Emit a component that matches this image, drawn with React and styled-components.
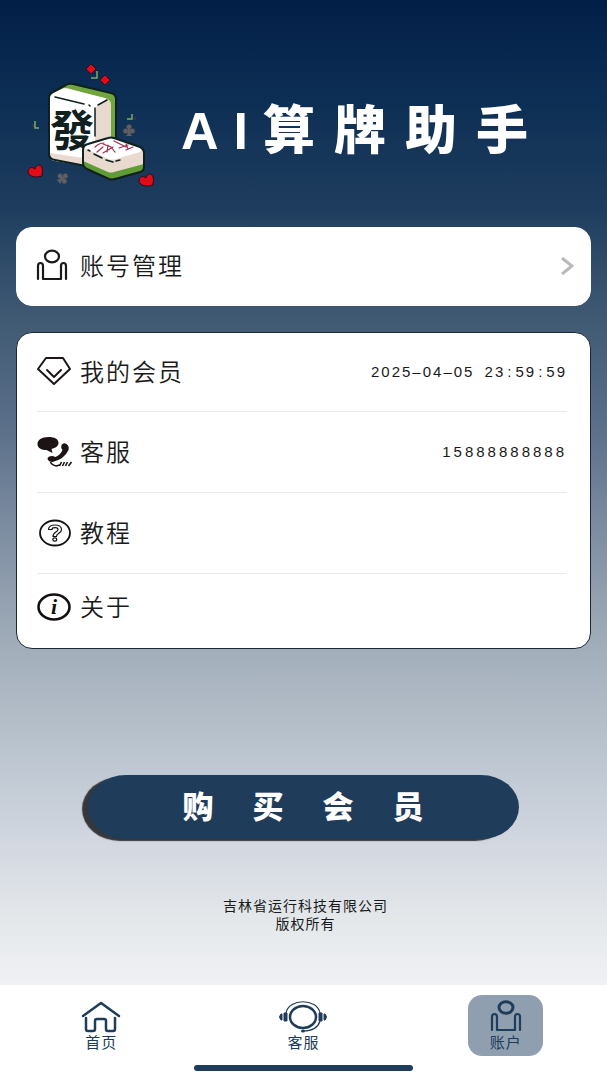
import React from "react";
import styled, { createGlobalStyle } from "styled-components";

const GlobalStyle = createGlobalStyle`
  * {
    box-sizing: border-box;
  }
  body {
    margin: 0;
    background: #fff;
    font-family: "Noto Sans CJK SC", "Noto Sans", sans-serif;
    color: #1a1a1a;
  }
`;

const Page = styled.div`
  display: flex;
  flex-direction: column;
  min-height: 100vh;
`;

const Main = styled.main`
  flex: 1;
  display: flex;
  flex-direction: column;
  padding: 62px 16px 50px;
  background: linear-gradient(
    #021f47 0%,
    #0d2e54 10%,
    #1e3d5e 21%,
    #3f5973 32%,
    #5d718b 44%,
    #7e8ea2 54%,
    #a2aeba 66%,
    #bac4cf 76%,
    #d3d8e1 86%,
    #e3e7ea 93%,
    #f0f1f5 100%
  );
`;

const Header = styled.header`
  display: flex;
  align-items: center;
  gap: 24px;
  height: 130px;
  padding-left: 10px;
  margin-bottom: 35px;
`;

const Title = styled.h1`
  margin: 0;
  padding-top: 8px;
  color: #fff;
  font-family: "Liberation Sans", "Noto Sans CJK SC", sans-serif;
  font-size: 52px;
  line-height: 60px;
  font-weight: 900;
  letter-spacing: 19px;
  white-space: nowrap;
`;

const Latin = styled.span`
  letter-spacing: 15px;
`;

const Card = styled.section`
  background: #fff;
  border: 1px solid ${(p) => (p.$outlined ? "#1c2733" : "#fff")};
  border-radius: 16px;
  padding: ${(p) => (p.$outlined ? "0 23px 8px 20px" : "0 16px 0 18px")};
  margin-bottom: ${(p) => (p.$outlined ? 0 : 26)}px;
`;

const Row = styled.a`
  display: grid;
  grid-template-columns: 36px 1fr auto;
  align-items: center;
  column-gap: ${(p) => p.$gap || 7}px;
  height: ${(p) => p.$height}px;
  border-bottom: 1px solid ${(p) => (p.$divider ? "#e9e9e9" : "transparent")};
  color: inherit;
  text-decoration: none;
`;

const Label = styled.span`
  padding-bottom: 2px;
  font-size: 24px;
  line-height: 32px;
  font-weight: 350;
  letter-spacing: 2px;
`;

const Value = styled.span`
  font-family: "Liberation Sans", Arial, sans-serif;
  font-size: 15px;
  line-height: 20px;
  letter-spacing: ${(p) => p.$tracking}px;
  white-space: nowrap;
`;

const Time = styled.span`
  margin-left: 4px;
`;

const Colon = styled.span`
  margin: 0 2px;
`;

const BuyButton = styled.button`
  align-self: center;
  width: 75%;
  height: 64px;
  margin: 126px 0 57px;
  padding: 0 0 4px 38px;
  border: 0;
  border-radius: 38px / 32px;
  background: #203c5b;
  box-shadow: -6px 2px 1px #35383b;
  color: #fff;
  font: 900 31px/40px "Noto Sans CJK SC", sans-serif;
  letter-spacing: 39px;
  white-space: nowrap;
`;

const Copyright = styled.footer`
  padding-left: 4px;
  font-size: 14px;
  line-height: 18px;
  letter-spacing: 1px;
  text-align: center;

  p {
    margin: 0;
  }
`;

const TabBar = styled.nav`
  display: grid;
  grid-template-columns: repeat(3, 1fr);
  justify-items: center;
  padding: 10px 0 9px;
  background: #fff;
`;

const Tab = styled.a`
  display: flex;
  flex-direction: column;
  align-items: center;
  width: 75px;
  height: 61px;
  padding-top: 5px;
  border-radius: 14px;
  background: ${(p) => (p.$active ? "#8f9fb0" : "transparent")};
  color: #203c5b;
  font-size: 15px;
  line-height: 16px;
  letter-spacing: 1px;
  text-decoration: none;
`;

const HomeIndicator = styled.div`
  justify-self: center;
  grid-column: 1 / -1;
  width: 36%;
  height: 6px;
  margin-top: 9px;
  border-radius: 3px;
  background: #203c5b;
`;

const Diamond = ({ x, y }) => (
  <path d={`M${x} ${y - 5}l5 5-5 5-5-5z`} fill="#e30b17" stroke="#3b0a16" />
);

const Heart = ({ transform }) => (
  <path
    transform={transform}
    d="M7 5C1 7-6 6-7 1c0-4 4-6 7-3 1-5 6-5 7-1 1 2 0 5 0 8z"
    fill="#e30b17"
    stroke="#2a0a18"
  />
);

const Club = ({ transform }) => (
  <g transform={transform} fill="#5d6064" stroke="#2e3640" strokeWidth=".6">
    <circle cx="0" cy="-3" r="2.8" />
    <circle cx="-3.3" cy="1" r="2.8" />
    <circle cx="3.3" cy="1" r="2.8" />
    <path d="M-1-2h2l.5 6 1.500 2h-6l1.500-2z" stroke="none" />
  </g>
);

const MahjongLogo = () => (
  <svg width="131" height="130" viewBox="26 62 131 130" fill="none" aria-hidden="true">
    {/* standing tile */}
    <path d="M53 92l13-7q3-2 7-1l38 9q5 1 5 6v58l-30 9-31-6q-6-1-6-6V98q0-4 4-6z" fill="#70a63d" />
    <path d="M53 93l14-5 40 11q4 1 4 6v50l-25 11-31-5q-6-1-6-6V98q0-4 4-5z" fill="#e8dace" />
    <path d="M49 98q0-4 4-5l11-5 41 10q3 1 1 3l-8 4q-3 2-3 6v48L49 155z" fill="#fff" />
    <path d="M50 153l40 6v7l-35-5q-5-1-5-8z" fill="#e8dace" />
    <path
      d="M53 92l13-7q3-2 7-1l38 9q5 1 5 6v58l-30 9-31-6q-6-1-6-6V98q0-4 4-6z"
      stroke="#10201f"
      strokeWidth="2"
      strokeLinejoin="round"
    />
    <path
      d="M55 97l29 7M89 105l1 1M95 108v28M98 105l9-5"
      stroke="#10201f"
      strokeWidth="1.500"
      strokeLinecap="round"
    />
    <text
      x="50"
      y="147"
      fill="#10201f"
      fontFamily="Noto Sans CJK TC, sans-serif"
      fontSize="44"
      fontWeight="700"
    >
      發
    </text>
    {/* lying tile */}
    <path d="M88 144l20-6q3-1 6 0l26 9q4 2 4 6v14q0 4-4 5l-25 7q-3 1-6 0l-22-10q-4-2-4-6v-13q0-5 5-6z" fill="#5f9c35" />
    <path d="M88 144l20-6q3-1 6 0l26 9q4 2 4 6v11l-30 8q-3 1-6 0l-25-11v-11q0-5 5-6z" fill="#e8dace" />
    <path d="M84 148q1-3 4-4l20-6q3-1 6 0l26 9q2 1 2 3l-2 2-24 7q-4 1-7 0z" fill="#fff" />
    <path
      d="M88 144l20-6q3-1 6 0l26 9q4 2 4 6v14q0 4-4 5l-25 7q-3 1-6 0l-22-10q-4-2-4-6v-13q0-5 5-6z"
      stroke="#10201f"
      strokeWidth="2"
      strokeLinejoin="round"
    />
    <path
      d="M88 150l2 1M94 154l8 4M106 160l7 2M116 161l4-1"
      stroke="#10201f"
      strokeWidth="1.500"
      strokeLinecap="round"
    />
    <path
      d="M95 147q4-4 9-4M103 144l8 3q3 4 4 5M103 147l-6 5M103 153l10-6M108 145l-1 7M114 141l12 6M119 148l9-3M126 144l2 5M126 150l7-3"
      stroke="#a2304d"
      strokeWidth="1.200"
      strokeLinecap="round"
    />
    <Diamond x={91} y={69} />
    <Diamond x={105} y={80} />
    <path d="M91 78h6v-7M127 119h5v-5M35 121v7h4" stroke="#78ad5c" strokeWidth="1.500" />
    <path d="M33 124v3M135 117v3" stroke="#6b2c40" />
    <Heart transform="translate(35 171)" />
    <Heart transform="translate(146 180)" />
    <Club transform="translate(129 130)" />
    <Club transform="translate(63 178) rotate(50)" />
  </svg>
);

const PersonIcon = ({ bold }) => (
  <svg width="34" height="34" viewBox="0 0 34 34" fill="none" stroke="currentColor" strokeWidth="2.200" strokeLinecap="round" strokeLinejoin="round" aria-hidden="true">
    <ellipse cx="17" cy="7.500" rx="7" ry="5.800" strokeWidth={bold ? 3 : 2.2} />
    <path d="M3 30V17q0-3 2.500-3T8 17v13h18V17q0-3 2.500-3t2.500 3v13" />
  </svg>
);

const MemberIcon = () => (
  <svg width="34" height="30" viewBox="0 0 34 30" fill="none" stroke="#1c1717" strokeWidth="2" strokeLinejoin="round" strokeLinecap="round" aria-hidden="true">
    <path d="M9 1h17l7 11-16 15L1 12z" />
    <path d="M10 13l7 7 7-7" />
  </svg>
);

const PhoneIcon = () => (
  <svg width="36" height="30" viewBox="0 0 35 30" fill="#1c1414" aria-hidden="true">
    <path d="M11 0C4 0 0 3 0 7s4 6 9 6l6 3-1-4c4-1 7-3 7-6 0-4-4-6-10-6z" />
    <path d="M24 8q2-3 5-1 3 2 2 6-4 9-16 12-4 0-5-3 0-3 5-3l3 1q5-2 7-7-2-2-1-5z" />
    <path
      d="M13 25q1 3 6 4l3-1M22 29l2-4M25 29l2-4M28 29l2-4M31 29l3-4"
      fill="none"
      stroke="#1c1414"
      strokeWidth="1.600"
    />
  </svg>
);

const HelpIcon = () => (
  <svg width="34" height="28" viewBox="0 0 34 28" fill="none" stroke="#111" strokeWidth="1.800" aria-hidden="true">
    <ellipse cx="18" cy="14" rx="15" ry="12.500" />
    <path
      d="M11.500 10.500c0-6 13-6 13 0 0 4-5 3.500-5 7h-3.500c0-5 5-4 5-7 0-2.500-6-2.500-6 0z"
      strokeWidth="1.200"
      strokeLinejoin="round"
    />
    <ellipse cx="17.800" cy="20.500" rx="2" ry="1.600" strokeWidth="1.200" />
  </svg>
);

const InfoIcon = () => (
  <svg width="34" height="28" viewBox="0 0 34 28" fill="none" aria-hidden="true">
    <ellipse cx="17" cy="14" rx="15.500" ry="12.500" stroke="#141010" strokeWidth="2.600" />
    <text
      x="17"
      y="21"
      textAnchor="middle"
      fill="#141010"
      fontFamily="Liberation Serif, serif"
      fontSize="22"
      fontStyle="italic"
      fontWeight="700"
    >
      i
    </text>
  </svg>
);

const Chevron = () => (
  <svg width="14" height="18" viewBox="0 0 14 18" fill="none" stroke="#b9b9b9" strokeWidth="3" aria-hidden="true">
    <path d="M2 1l10 8-10 8" />
  </svg>
);

const HomeIcon = () => (
  <svg width="40" height="34" viewBox="0 0 40 34" fill="none" stroke="currentColor" strokeWidth="2.500" strokeLinecap="round" strokeLinejoin="round" aria-hidden="true">
    <path d="M2 16L20 3l18 13" />
    <path d="M5 18v11q0 2 2 2h5q2 0 2-2v-8q0-2 2-2h7q2 0 2 2v8q0 2 2 2h5q2 0 2-2V18" />
  </svg>
);

const HeadsetIcon = () => (
  <svg width="50" height="34" viewBox="0 0 50 34" fill="none" stroke="currentColor" aria-hidden="true">
    <ellipse cx="25" cy="17" rx="13" ry="11" strokeWidth="2.500" />
    <path d="M8 13c3-15 31-15 34 0M42 21c-2 7-9 10-17 10" strokeWidth="1.200" />
    <path d="M9 13v8H6v-8zM41 13v8h3v-8zM3 14h1v6H3q-3-3 0-6zM46 14h1q3 3 0 6h-1z" fill="currentColor" strokeWidth="1" />
    <ellipse cx="25" cy="31" rx="2" ry="1.500" fill="currentColor" stroke="none" />
  </svg>
);

const App = () => {
  return (
    <>
      <GlobalStyle />
      <Page>
        <Main>
          <Header>
            <MahjongLogo />
            <Title>
              <Latin>AI</Latin>算牌助手
            </Title>
          </Header>

          <Card>
            <Row href="#account" $height={77} $gap={9}>
              <PersonIcon />
              <Label>账号管理</Label>
              <Chevron />
            </Row>
          </Card>

          <Card $outlined>
            <Row href="#member" $height={79} $divider>
              <MemberIcon />
              <Label>我的会员</Label>
              <Value $tracking={2}>
                2025–04–05 <Time>23<Colon>:</Colon>59<Colon>:</Colon>59</Time>
              </Value>
            </Row>
            <Row href="#service" $height={81} $divider>
              <PhoneIcon />
              <Label>客服</Label>
              <Value $tracking={3}>15888888888</Value>
            </Row>
            <Row href="#guide" $height={81} $divider>
              <HelpIcon />
              <Label>教程</Label>
            </Row>
            <Row href="#about" $height={66}>
              <InfoIcon />
              <Label>关于</Label>
            </Row>
          </Card>

          <BuyButton type="button">购买会员</BuyButton>

          <Copyright>
            <p>吉林省运行科技有限公司</p>
            <p>版权所有</p>
          </Copyright>
        </Main>

        <TabBar>
          <Tab href="#home">
            <HomeIcon />
            首页
          </Tab>
          <Tab href="#service">
            <HeadsetIcon />
            客服
          </Tab>
          <Tab href="#account" $active aria-current="page">
            <PersonIcon bold />
            账户
          </Tab>
          <HomeIndicator />
        </TabBar>
      </Page>
    </>
  );
};

export default App;
